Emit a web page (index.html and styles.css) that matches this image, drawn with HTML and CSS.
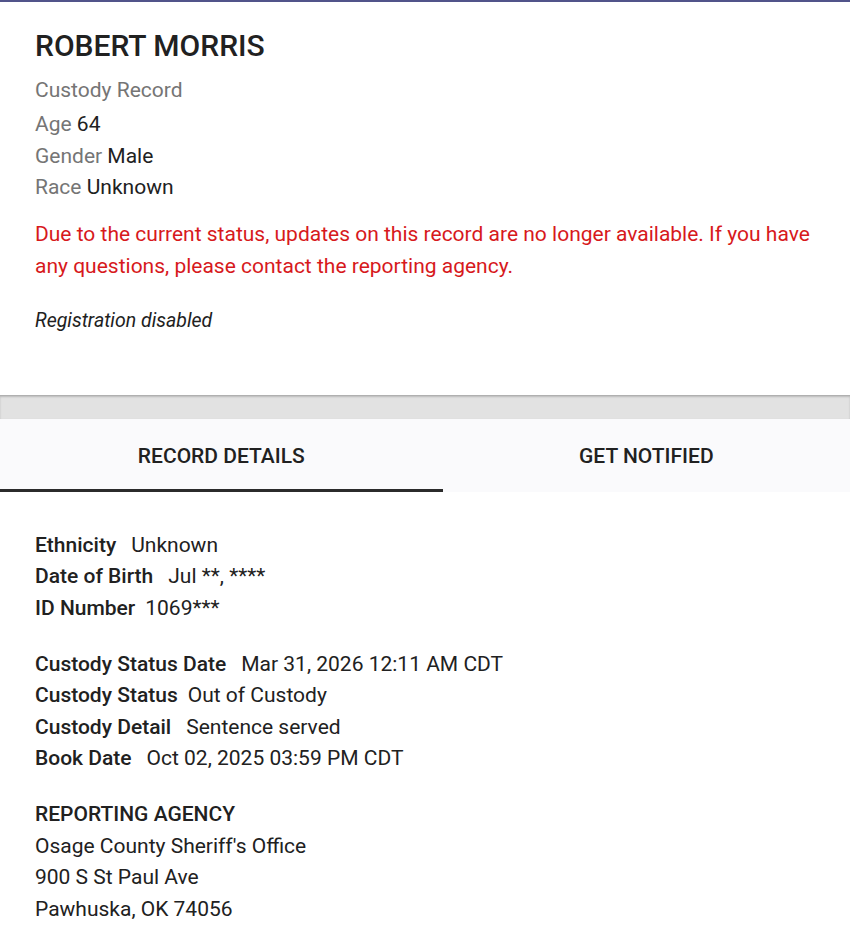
FILE: index.html
```html
<!DOCTYPE html>
<html lang="en">
<head>
<meta charset="utf-8">
<title>Robert Morris - Custody Record</title>
<link rel="stylesheet" href="styles.css">
</head>
<body>
<div class="page">
  <header class="summary">
    <h1 class="name">ROBERT MORRIS</h1>
    <div class="subtitle">Custody Record</div>
    <div class="row"><span class="muted">Age</span> <span class="val">64</span></div>
    <div class="row"><span class="muted">Gender</span> <span class="val">Male</span></div>
    <div class="row"><span class="muted">Race</span> <span class="val">Unknown</span></div>
    <p class="notice">Due to the current status, updates on this record are no longer available. If you have any questions, please contact the reporting agency.</p>
    <p class="reg">Registration disabled</p>
  </header>
  <div class="band"></div>
  <nav class="tabs">
    <div class="tab active">RECORD DETAILS</div>
    <div class="tab">GET NOTIFIED</div>
  </nav>
  <section class="details">
    <div class="group">
      <div class="line"><span class="lbl">Ethnicity</span><span class="dv">Unknown</span></div>
      <div class="line"><span class="lbl">Date of Birth</span><span class="dv">Jul **, ****</span></div>
      <div class="line"><span class="lbl">ID Number</span><span class="dv sm">1069***</span></div>
    </div>
    <div class="group">
      <div class="line"><span class="lbl">Custody Status Date</span><span class="dv">Mar 31, 2026 12:11 AM CDT</span></div>
      <div class="line"><span class="lbl">Custody Status</span><span class="dv sm">Out of Custody</span></div>
      <div class="line"><span class="lbl">Custody Detail</span><span class="dv">Sentence served</span></div>
      <div class="line"><span class="lbl">Book Date</span><span class="dv">Oct 02, 2025 03:59 PM CDT</span></div>
    </div>
    <div class="group">
      <div class="line"><span class="lbl">REPORTING AGENCY</span></div>
      <div class="line">Osage County Sheriff's Office</div>
      <div class="line">900 S St Paul Ave</div>
      <div class="line">Pawhuska, OK 74056</div>
    </div>
  </section>
</div>
</body>
</html>
```

FILE: styles.css
```css
html, body {
  margin: 0;
  padding: 0;
  background: #ffffff;
}
body {
  font-family: Roboto, "Liberation Sans", Arial, sans-serif;
  color: #212121;
  font-size: 21px;
}
.page {
  border-top: 2px solid #51548a;
}
.summary {
  padding: 26px 35px 62px;
  border-bottom: 1px solid #b0b0b0;
}
.name {
  margin: 0 0 10px;
  font-size: 30px;
  line-height: 36px;
  font-weight: 500;
  color: #212121;
}
.subtitle {
  color: #757575;
  line-height: 32px;
  margin-bottom: 3px;
}
.row {
  line-height: 31.5px;
}
.muted {
  color: #757575;
}
.val {
  color: #212121;
}
.notice {
  margin: 14px 0 0;
  color: #d7191c;
  line-height: 32px;
}
.reg {
  margin: 27px 0 0;
  font-style: italic;
  font-size: 19.5px;
  line-height: 24px;
  color: #212121;
}
.band {
  height: 23px;
  background: #e2e2e2;
  box-shadow: inset 0 1px 2px rgba(0,0,0,0.18);
}
.tabs {
  display: flex;
  background: #fafafc;
  height: 73px;
}
.tab {
  flex: 1 1 auto;
  display: flex;
  align-items: center;
  justify-content: center;
  font-size: 21px;
  font-weight: 500;
  color: #212121;
  border-bottom: 3px solid transparent;
  box-sizing: border-box;
  padding-top: 4px;
}
.tab.active {
  border-bottom-color: #2b2b2b;
  padding-left: 1.5px;
  padding-right: 1.5px;
}
.details {
  padding: 38px 35px 20px;
}
.group {
  margin-bottom: 24.5px;
}
.line {
  line-height: 31.5px;
}
.lbl {
  font-weight: 500;
}
.dv {
  margin-left: 15px;
}
.dv.sm {
  margin-left: 10px;
}
```
